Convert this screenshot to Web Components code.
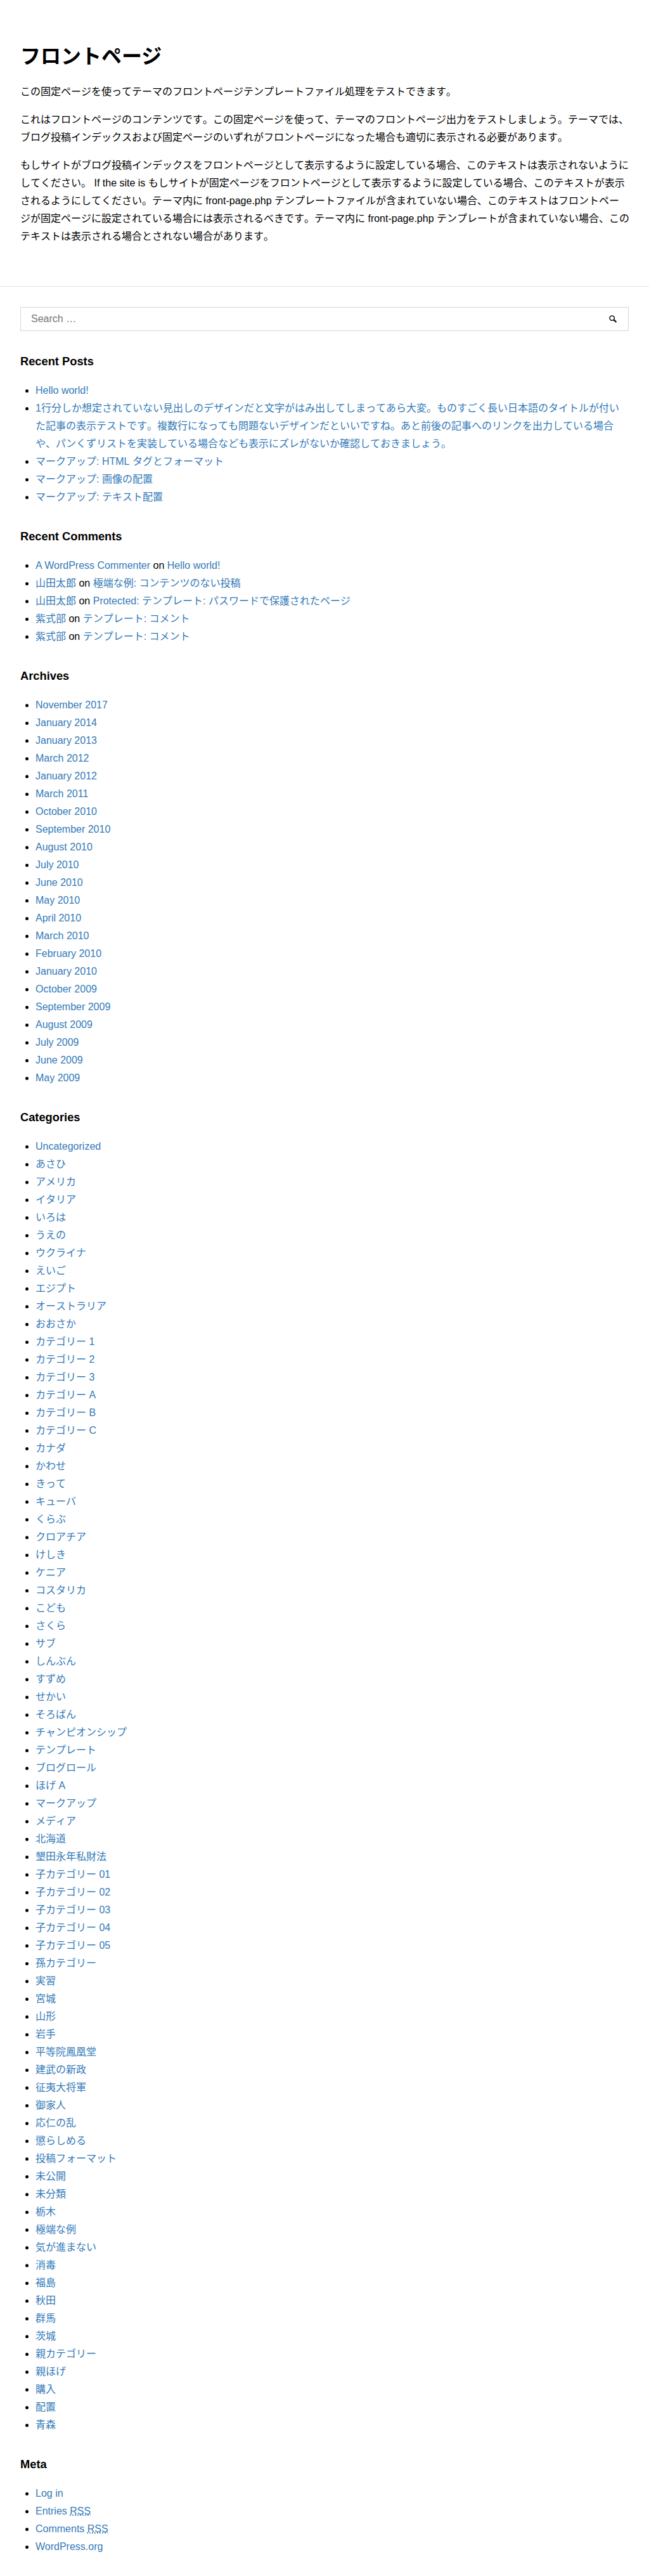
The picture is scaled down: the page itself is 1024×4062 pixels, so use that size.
<!DOCTYPE html>
<html lang="en">
<head>
<meta charset="utf-8">
<title>フロントページ</title>
<style>
body{margin:0;background:#fff;color:#000;font:16px/28px "Liberation Sans","Noto Sans CJK JP",sans-serif}
</style>
</head>
<body>
<page-article heading="フロントページ">
<page-text>この固定ページを使ってテーマのフロントページテンプレートファイル処理をテストできます。</page-text>
<page-text>これはフロントページのコンテンツです。この固定ページを使って、テーマのフロントページ出力をテストしましょう。テーマでは、ブログ投稿インデックスおよび固定ページのいずれがフロントページになった場合も適切に表示される必要があります。</page-text>
<page-text>もしサイトがブログ投稿インデックスをフロントページとして表示するように設定している場合、このテキストは表示されないようにしてください。 If the site is もしサイトが固定ページをフロントページとして表示するように設定している場合、このテキストが表示されるようにしてください。テーマ内に front-page.php テンプレートファイルが含まれていない場合、このテキストはフロントペー<br>ジが固定ページに設定されている場合には表示されるべきです。テーマ内に front-page.php テンプレートが含まれていない場合、この<br>テキストは表示される場合とされない場合があります。</page-text>
</page-article>
<page-sidebar>
<search-form></search-form>
<link-widget heading="Recent Posts" items="Hello world!|1行分しか想定されていない見出しのデザインだと文字がはみ出してしまってあら大変。ものすごく長い日本語のタイトルが付いた記事の表示テストです。複数行になっても問題ないデザインだといいですね。あと前後の記事へのリンクを出力している場合や、パンくずリストを実装している場合なども表示にズレがないか確認しておきましょう。|マークアップ: HTML タグとフォーマット|マークアップ: 画像の配置|マークアップ: テキスト配置"></link-widget>
<link-widget heading="Recent Comments" items="A WordPress Commenter~Hello world!|山田太郎~極端な例: コンテンツのない投稿|山田太郎~Protected: テンプレート: パスワードで保護されたページ|紫式部~テンプレート: コメント|紫式部~テンプレート: コメント"></link-widget>
<link-widget heading="Archives" items="November 2017|January 2014|January 2013|March 2012|January 2012|March 2011|October 2010|September 2010|August 2010|July 2010|June 2010|May 2010|April 2010|March 2010|February 2010|January 2010|October 2009|September 2009|August 2009|July 2009|June 2009|May 2009"></link-widget>
<link-widget heading="Categories" items="Uncategorized|あさひ|アメリカ|イタリア|いろは|うえの|ウクライナ|えいご|エジプト|オーストラリア|おおさか|カテゴリー 1|カテゴリー 2|カテゴリー 3|カテゴリー A|カテゴリー B|カテゴリー C|カナダ|かわせ|きって|キューバ|くらぶ|クロアチア|けしき|ケニア|コスタリカ|こども|さくら|サブ|しんぶん|すずめ|せかい|そろばん|チャンピオンシップ|テンプレート|ブログロール|ほげ A|マークアップ|メディア|北海道|墾田永年私財法|子カテゴリー 01|子カテゴリー 02|子カテゴリー 03|子カテゴリー 04|子カテゴリー 05|孫カテゴリー|実習|宮城|山形|岩手|平等院鳳凰堂|建武の新政|征夷大将軍|御家人|応仁の乱|懲らしめる|投稿フォーマット|未公開|未分類|栃木|極端な例|気が進まない|消毒|福島|秋田|群馬|茨城|親カテゴリー|親ほげ|購入|配置|青森"></link-widget>
<link-widget heading="Meta" items="Log in|Entries ^RSS|Comments ^RSS|WordPress.org"></link-widget>
</page-sidebar>
<script>
const shadow = (el, html) => { el.attachShadow({mode: 'open'}).innerHTML = html; };

customElements.define('page-article', class extends HTMLElement {
  connectedCallback() {
    shadow(this, `<style>
      :host{display:block;padding:64px 32px;border-bottom:1px solid #e4e4e4}
      h1{margin:0 0 17px;font-size:32px;line-height:50px;font-weight:700}
      div{display:flex;flex-direction:column;gap:16px}
    </style><h1>${this.getAttribute('heading')}</h1><div><slot></slot></div>`);
  }
});

customElements.define('page-text', class extends HTMLElement {
  connectedCallback() {
    // The small negative margin absorbs fractional glyph advances on full lines.
    shadow(this, `<style>:host{display:block;font-kerning:none}p{margin:0 -4px 0 0}</style><p><slot></slot></p>`);
  }
});

customElements.define('page-sidebar', class extends HTMLElement {
  connectedCallback() {
    shadow(this, `<style>:host{display:flex;flex-direction:column;gap:32px;padding:32px}</style><slot></slot>`);
  }
});

customElements.define('search-form', class extends HTMLElement {
  connectedCallback() {
    shadow(this, `<style>
      :host{display:block}
      form{display:flex;align-items:center;box-sizing:border-box;height:38px;border:1px solid #d6d6d6;padding:0 16px;margin:0}
      input{flex:1;min-width:0;border:0;padding:0;outline:0;background:none;font:inherit;line-height:20px;height:20px}
      input::placeholder{color:#757575;opacity:1}
      button{display:flex;border:0;padding:0;background:none}
    </style><form><input type="search" placeholder="Search …" aria-label="Search"><button type="button" aria-label="Search"><svg width="16" height="16" viewBox="0 0 16 16"><circle cx="6.7" cy="6.6" r="3.7" fill="none" stroke="#111" stroke-width="1.5"/><path d="M9.1 9.1l1 1" stroke="#111" stroke-width="1.5"/><path d="M10.2 9.9l2.5 2.5" stroke="#111" stroke-width="2.3" stroke-linecap="round"/></svg></button></form>`);
  }
});

customElements.define('link-widget', class extends HTMLElement {
  connectedCallback() {
    const link = text => {
      const [label, abbr] = text.split('^');
      return `<a>${label}${abbr ? `<abbr title="Really Simple Syndication">${abbr}</abbr>` : ''}</a>`;
    };
    // Japanese titles are set solid; Latin ones keep their kerning pairs.
    const rows = this.getAttribute('items').split('|')
      .map(item => `<li${/[^\x00-\x7f]/.test(item) ? ' class="solid"' : ''}>${item.split('~').map(link).join(' on ')}</li>`).join('');
    shadow(this, `<style>
      :host{display:block}
      h2{margin:0 0 16px;font-size:18.3px;line-height:32px;font-weight:700}
      ul{margin:0;padding:0 0 0 24px}
      .solid{font-kerning:none}
      a{color:#337ab7;text-decoration:none}
      abbr{text-decoration:underline dotted}
    </style><h2>${this.getAttribute('heading')}</h2><ul>${rows}</ul>`);
  }
});
</script>
</body>
</html>
